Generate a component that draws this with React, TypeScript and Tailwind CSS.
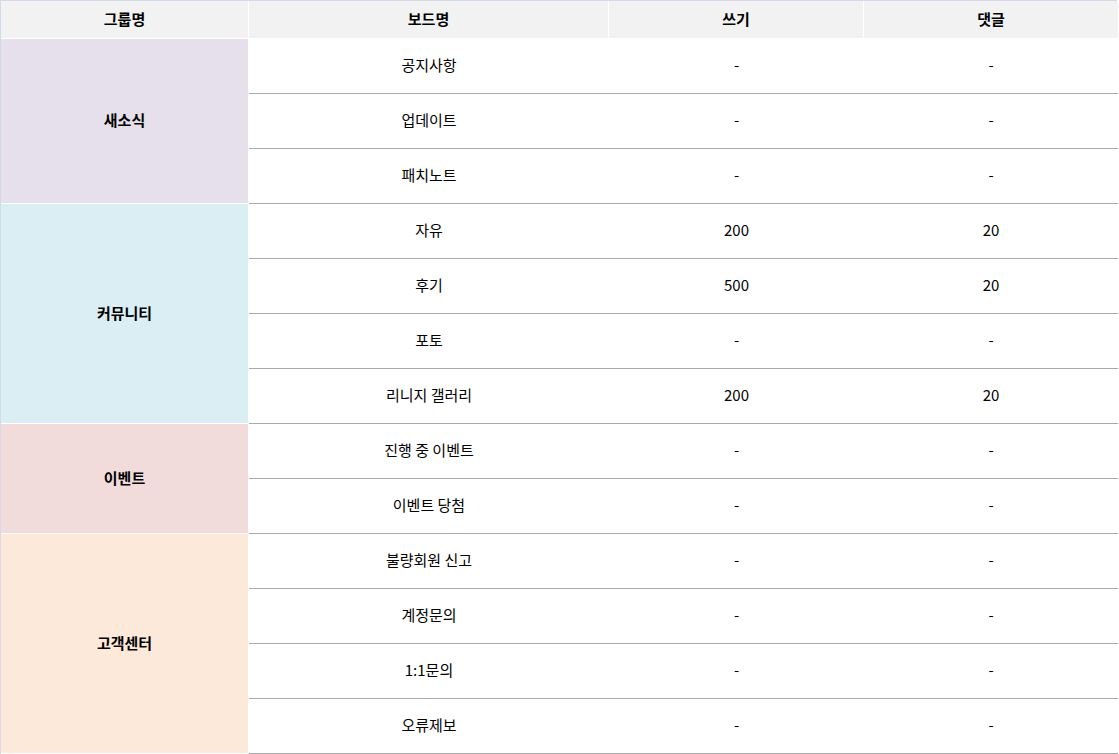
const groups = [
  {
    name: "새소식",
    bg: "bg-[#e5e0ec]",
    rows: [
      { board: "공지사항", write: "-", reply: "-" },
      { board: "업데이트", write: "-", reply: "-" },
      { board: "패치노트", write: "-", reply: "-" },
    ],
  },
  {
    name: "커뮤니티",
    bg: "bg-[#dbeef3]",
    rows: [
      { board: "자유", write: "200", reply: "20" },
      { board: "후기", write: "500", reply: "20" },
      { board: "포토", write: "-", reply: "-" },
      { board: "리니지 갤러리", write: "200", reply: "20" },
    ],
  },
  {
    name: "이벤트",
    bg: "bg-[#f2dcdb]",
    rows: [
      { board: "진행 중 이벤트", write: "-", reply: "-" },
      { board: "이벤트 당첨", write: "-", reply: "-" },
    ],
  },
  {
    name: "고객센터",
    bg: "bg-[#fde9d9]",
    rows: [
      { board: "불량회원 신고", write: "-", reply: "-" },
      { board: "계정문의", write: "-", reply: "-" },
      { board: "1:1문의", write: "-", reply: "-" },
      { board: "오류제보", write: "-", reply: "-" },
    ],
  },
];

const spans: Record<number, string> = {
  2: "row-span-2",
  3: "row-span-3",
  4: "row-span-4",
};

export default function App() {
  return (
    <div
      className="w-[1117px] bg-white text-[15px] leading-none text-black border-t border-l border-[#d3dbe8]"
      style={{ fontFamily: '"Noto Sans CJK KR", "Noto Sans", sans-serif' }}
    >
      {/* 헤더 */}
      <div className="grid grid-cols-[248px_360px_255px_254px] h-[38px] font-bold">
        <div className="flex items-center justify-center pb-[3px] bg-[#f2f2f2] border-r border-b border-white">그룹명</div>
        <div className="flex items-center justify-center pb-[3px] bg-[#f2f2f2] border-r border-b border-white">보드명</div>
        <div className="flex items-center justify-center pb-[3px] bg-[#f2f2f2] border-r border-b border-white">쓰기</div>
        <div className="flex items-center justify-center pb-[3px] bg-[#f2f2f2] border-b border-white">댓글</div>
      </div>

      {/* 본문 */}
      <div className="grid grid-cols-[248px_360px_255px_254px] auto-rows-[55px]">
        {groups.map(group => (
          <>
            <div
              key={group.name}
              className={`${spans[group.rows.length]} ${group.bg} flex items-center justify-center pb-[3px] font-bold border-r border-b border-white`}
            >
              {group.name}
            </div>
            {group.rows.map(row => (
              <>
                <div key={row.board + "b"} className="flex items-center justify-center pb-[3px] border-b border-[#aaaaaa]">
                  {row.board}
                </div>
                <div key={row.board + "w"} className="flex items-center justify-center pb-[3px] border-b border-[#aaaaaa]">
                  {row.write}
                </div>
                <div key={row.board + "r"} className="flex items-center justify-center pb-[3px] border-b border-[#aaaaaa]">
                  {row.reply}
                </div>
              </>
            ))}
          </>
        ))}
      </div>
    </div>
  );
}
